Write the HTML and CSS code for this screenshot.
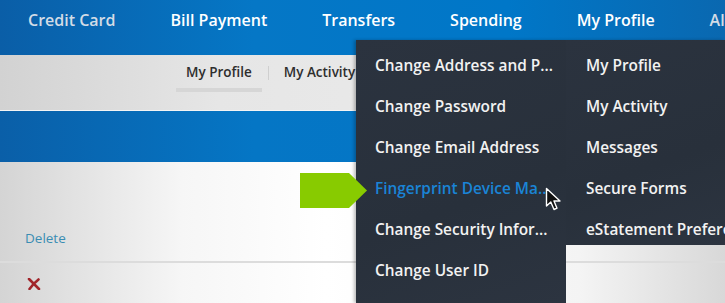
FILE: index.html
```html
<!DOCTYPE html>
<html lang="en">
<head>
    <meta charset="UTF-8">
    <meta name="viewport" content="width=device-width, initial-scale=1.0">
    <title>My Profile Menu</title>
    <link rel="stylesheet" href="styles.css">
</head>
<body>
    <div class="page">
        <nav class="topnav">
            <a class="nav-item dim">Credit Card</a>
            <a class="nav-item">Bill Payment</a>
            <a class="nav-item">Transfers</a>
            <a class="nav-item">Spending</a>
            <a class="nav-item">My Profile</a>
            <a class="nav-item dim">Alerts</a>
        </nav>
        <div class="subnav">
            <div class="sub-item active">My Profile</div>
            <span class="sub-sep"></span>
            <div class="sub-item">My Activity</div>
        </div>
        <div class="band"></div>
        <div class="content">
            <div class="row-link">Delete</div>
            <div class="row-icon">
                <svg width="14" height="12" viewBox="0 0 14 12">
                    <path d="M2 1 L12 11 M11.5 1.5 Q7 5 2.5 11" stroke="#a1242a" stroke-width="2.6" fill="none" stroke-linecap="round"/>
                </svg>
            </div>
        </div>

        <div class="dropdown">
            <ul class="menu-col left">
                <li>Change Address and P...</li>
                <li>Change Password</li>
                <li>Change Email Address</li>
                <li class="hover">Fingerprint Device Ma...</li>
                <li>Change Security Infor...</li>
                <li>Change User ID</li>
            </ul>
            <ul class="menu-col right">
                <li>My Profile</li>
                <li>My Activity</li>
                <li>Messages</li>
                <li>Secure Forms</li>
                <li>eStatement Preferences</li>
            </ul>
        </div>

        <div class="pointer-arrow"></div>
        <svg class="cursor" width="18" height="26" viewBox="0 0 18 26">
            <polygon points="1.5,1.5 1.5,19 5.8,15 9,22.5 12,21.2 9,14 15,14" fill="#111" stroke="#fff" stroke-width="1.4" stroke-linejoin="round"/>
        </svg>
    </div>
</body>
</html>
```

FILE: styles.css
```css
body {
    margin: 0;
    font-family: 'Open Sans', 'Noto Sans', sans-serif;
    background-color: #fff;
}

.page {
    position: relative;
    width: 725px;
    height: 303px;
    overflow: hidden;
}

.topnav {
    display: flex;
    gap: 55px;
    height: 55px;
    box-sizing: border-box;
    padding: 8px 0 0 28px;
    background: linear-gradient(90deg, #0a5ea7 0%, #0577c6 35%, #0077c8 70%, #0a68b0 100%);
    white-space: nowrap;
}

.nav-item {
    font-size: 16px;
    font-weight: 600;
    line-height: 24px;
    color: #fff;
}

.nav-item.dim {
    color: #d3dce6;
}

.subnav {
    display: flex;
    align-items: flex-start;
    height: 55px;
    padding-left: 176px;
    border-bottom: 1px solid #f4f4f4;
    background: linear-gradient(90deg, #d2d2d2 0%, #e6e6e6 30%, #eeeeee 100%);
}

.sub-item {
    padding: 7px 10px 0;
    font-size: 13.5px;
    font-weight: 600;
    line-height: 20px;
    color: #2e2e2e;
}

.sub-item.active::after {
    content: '';
    display: block;
    height: 4px;
    margin: 6px -10px 0;
    background-color: #d6d6d6;
}

.sub-sep {
    width: 1px;
    height: 14px;
    margin: 11px 5px 0 6px;
    background-color: #cfcfcf;
}

.band {
    height: 51px;
    background: linear-gradient(90deg, #0a5fa8 0%, #0576c5 35%, #0077c8 100%);
}

.content {
    height: 141px;
    background: linear-gradient(90deg, #d4d4d4 0%, #f6f6f6 25%, #ffffff 45%, #f4f4f4 80%, #d8d8d8 100%);
}

.row-link {
    padding: 66px 0 0 25px;
    height: 33px;
    font-size: 13.5px;
    line-height: 20px;
    color: #3a8db3;
    border-bottom: 2px solid #dcdcdc;
}

.row-icon {
    padding: 10px 0 0 27px;
}

.dropdown {
    position: absolute;
    left: 356px;
    top: 40px;
    display: flex;
    align-items: flex-start;
    box-shadow: -2px 0 3px rgba(0, 0, 0, 0.25);
}

.menu-col {
    list-style: none;
    margin: 0;
    box-sizing: border-box;
    padding: 5px 0 0 19px;
    background: linear-gradient(160deg, #2b333f 0%, #28303b 60%, #2c3440 100%);
    white-space: nowrap;
    overflow: hidden;
}

.menu-col.left {
    width: 210px;
    height: 263px;
}

.menu-col.right {
    width: 159px;
    height: 205px;
    padding-left: 20px;
}

.menu-col li {
    font-size: 15.4px;
    font-weight: 600;
    line-height: 41px;
    color: #f2f2f2;
}

.menu-col li.hover {
    color: #1a84d6;
}

.pointer-arrow {
    position: absolute;
    left: 300px;
    top: 173px;
    width: 67px;
    height: 35px;
    background-color: #88cb00;
    clip-path: polygon(0 0, 49px 0, 67px 17.5px, 49px 35px, 0 35px);
}

.cursor {
    position: absolute;
    left: 545px;
    top: 187px;
}
```
